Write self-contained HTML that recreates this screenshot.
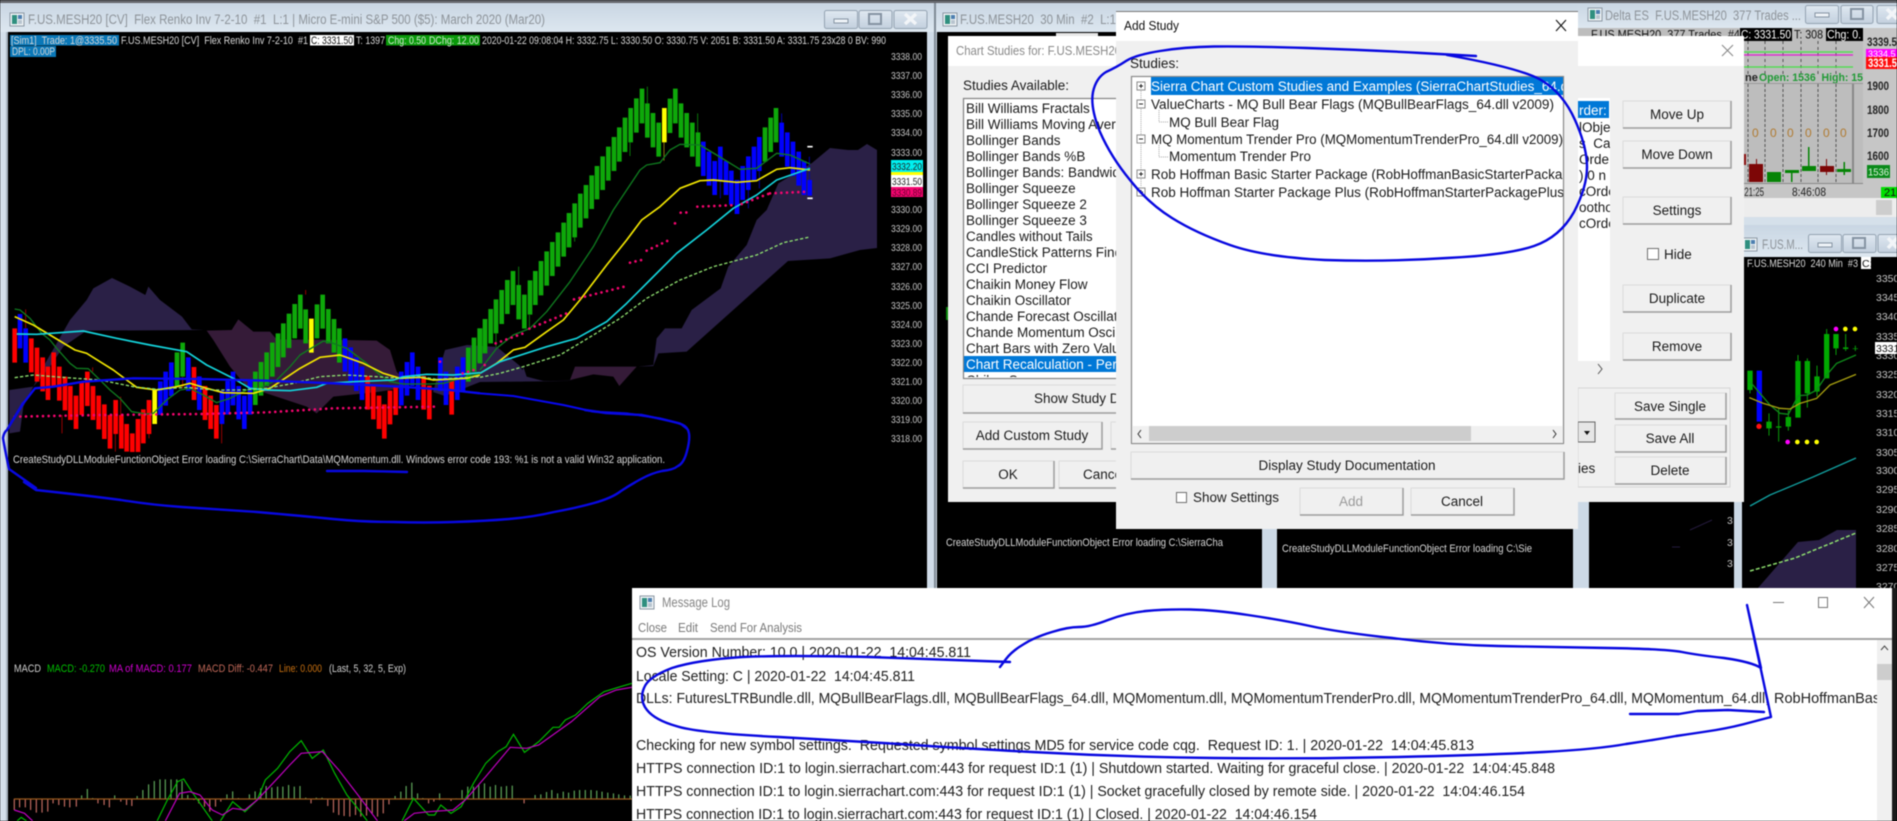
<!DOCTYPE html>
<html><head><meta charset="utf-8"><title>Sierra Chart</title>
<style>
html,body{margin:0;padding:0;background:#000;width:1897px;height:821px;overflow:hidden}
svg{display:block;position:absolute;left:0;top:0;filter:blur(.4px)}
text{font-family:"Liberation Sans",sans-serif;white-space:pre}
.ns{vector-effect:non-scaling-stroke}
.t{font-size:13.5px;fill:#1a1a1a}
.c{font-size:13.5px;fill:#1a1a1a;text-anchor:middle}
.p{font-size:10.5px;fill:#c4c4c4}
.s{font-size:11px;fill:#d8d8d8}
.l{font-size:14.5px;fill:#202020}
.w{font-size:13.5px;fill:#8d9399}
.btn{fill:#f0f0f0;stroke:#dcdcdc;stroke-width:1}
.bd{fill:none;stroke:#9c9c9c;stroke-width:1.5}
.hand{fill:none;stroke:#0808e0;stroke-width:2.4;stroke-linejoin:round;stroke-linecap:round}
.ln{fill:none;stroke-linejoin:round}
</style></head><body>
<svg width="1897" height="821" viewBox="0 0 1897 821" xmlns="http://www.w3.org/2000/svg">
<defs>
<linearGradient id="tb" x1="0" y1="0" x2="0" y2="1"><stop offset="0" stop-color="#c9d6e3"/><stop offset="1" stop-color="#dde7f0"/></linearGradient>
<linearGradient id="wb" x1="0" y1="0" x2="0" y2="1"><stop offset="0" stop-color="#dfe8f1"/><stop offset="1" stop-color="#c3d0de"/></linearGradient>
<clipPath id="tree"><rect x="1131" y="76" width="432" height="350"/></clipPath>
<clipPath id="log"><rect x="632" y="640" width="1245" height="181"/></clipPath>
<clipPath id="list"><rect x="963" y="98" width="153" height="279"/></clipPath>
<clipPath id="ch1"><rect x="8" y="32" width="919" height="789"/></clipPath>
<clipPath id="ch4"><rect x="1742" y="257" width="155" height="331"/></clipPath>
<clipPath id="ch3"><rect x="1578" y="28" width="319" height="170"/></clipPath>
<g id="ico"><rect x="0" y="0" width="14" height="13" fill="#eef2f5" stroke="#8a97a3"/><rect x="2" y="2" width="5" height="9" fill="#2f8f7f"/><rect x="8" y="2" width="4" height="4" fill="#4d7fb0"/><rect x="8" y="7" width="4" height="4" fill="#b8c4cf"/></g>
</defs>

<rect width="1897" height="821" fill="#000"/>
<rect width="1897" height="3" fill="#62646a"/>

<!-- window frames -->
<rect x="0" y="3" width="937" height="818" fill="#d4dfea"/>
<rect x="0" y="3" width="937" height="29" fill="url(#tb)"/>
<rect x="8" y="32" width="919" height="789" fill="#000"/>
<rect x="927" y="32" width="10" height="789" fill="#d0dce8"/>
<rect x="934" y="3" width="2" height="818" fill="#7f8a95"/>
<rect x="6" y="32" width="2" height="789" fill="#a8b4c0"/>
<use href="#ico" x="10" y="13"/>
<text class="w" x="28" y="24" textLength="517" lengthAdjust="spacingAndGlyphs">F.US.MESH20 [CV]  Flex Renko Inv 7-2-10  #1  L:1 | Micro E-mini S&amp;P 500 ($5): March 2020 (Mar20)</text>
<g fill="url(#wb)" stroke="#93a2b1"><rect x="824.500" y="10.500" width="33" height="18" rx="2"/><rect x="859" y="10.500" width="33" height="18" rx="2"/><rect x="894" y="10.500" width="33" height="18" rx="2"/></g>
<rect x="834" y="19" width="14" height="4" fill="#eef3f7" stroke="#8593a2"/>
<rect x="869" y="14" width="12" height="10" fill="none" stroke="#8593a2" stroke-width="2"/>
<path d="M905 14L916 24M916 14L905 24" stroke="#f2f5f8" stroke-width="3.500"/>

<!-- window 2 -->
<rect x="937" y="3" width="645" height="29" fill="url(#tb)"/>
<rect x="940" y="32" width="322" height="556" fill="#000"/>
<rect x="1262" y="32" width="15" height="556" fill="#ccd9e6"/>
<rect x="1277" y="32" width="296" height="556" fill="#000"/>
<rect x="1573" y="28" width="16" height="560" fill="#ccd9e6"/>
<rect x="1589" y="28" width="145" height="560" fill="#000"/>
<rect x="1734" y="190" width="8" height="398" fill="#ccd9e6"/>
<use href="#ico" x="943" y="13"/>
<text class="w" x="960" y="24" textLength="156" lengthAdjust="spacingAndGlyphs">F.US.MESH20  30 Min  #2  L:1</text>
<rect x="1056" y="33" width="42" height="3" fill="#e8e8e8"/>
<rect x="946" y="307" width="2" height="13" fill="#0a8a0a"/>
<text class="s" x="946" y="546" textLength="277" lengthAdjust="spacingAndGlyphs" fill="#cfcfcf">CreateStudyDLLModuleFunctionObject Error loading C:\SierraCha</text>
<text class="s" x="1282" y="552" textLength="250" lengthAdjust="spacingAndGlyphs" fill="#cfcfcf">CreateStudyDLLModuleFunctionObject Error loading C:\Sie</text>
<text class="p" x="1727" y="524">3</text><text class="p" x="1727" y="546">3</text><text class="p" x="1727" y="567">3</text>
<path d="M1690 530L1712 520M1672 547H1680" stroke="#241a3c" fill="none"/>

<!-- window 3 -->
<rect x="1578" y="3" width="319" height="25" fill="url(#tb)"/>
<use href="#ico" x="1588" y="8"/>
<text class="w" x="1605" y="20" textLength="196" lengthAdjust="spacingAndGlyphs">Delta ES  F.US.MESH20  377 Trades ...</text>
<g fill="url(#wb)" stroke="#93a2b1"><rect x="1805.500" y="5.500" width="33" height="18" rx="2"/><rect x="1841" y="5.500" width="32" height="18" rx="2"/><rect x="1877" y="5.500" width="30" height="18" rx="2"/></g>
<rect x="1815" y="13" width="14" height="4" fill="#eef3f7" stroke="#8593a2"/>
<rect x="1851" y="9" width="12" height="10" fill="none" stroke="#8593a2" stroke-width="2"/>
<path d="M1887 9L1897 19M1897 9L1887 19" stroke="#f2f5f8" stroke-width="3.500"/>
<g clip-path="url(#ch3)">
<rect x="1578" y="28" width="319" height="170" fill="#c6c6c6"/>
<rect x="1578" y="28" width="285" height="156" fill="#bdbdbd"/>
<text x="1591" y="38.500" font-size="11.500" fill="#111" textLength="149" lengthAdjust="spacingAndGlyphs">F.US.MESH20  377 Trades  #4</text>
<rect x="1740" y="28" width="52" height="13" fill="#000"/>
<text x="1741" y="38.500" font-size="11.500" fill="#fff" textLength="50" lengthAdjust="spacingAndGlyphs">C: 3331.50</text>
<text x="1794" y="38.500" font-size="11.500" fill="#111" textLength="29" lengthAdjust="spacingAndGlyphs">T: 308</text>
<rect x="1826" y="28" width="37" height="13" fill="#000"/>
<text x="1827" y="38.500" font-size="11.500" fill="#fff" textLength="34" lengthAdjust="spacingAndGlyphs">Chg: 0.</text>
<path d="M1748 41V74M1765 41V74M1783 41V74M1801 41V74M1818 41V74M1836 41V74" stroke="#555" stroke-dasharray="3 3" fill="none"/>
<path d="M1742 52H1853M1742 67H1853" stroke="#45e045" stroke-width="1.300"/>
<path d="M1742 55H1853" stroke="#e020d0" stroke-width="1.300"/>
<text x="1745" y="81" font-size="11" font-weight="bold" fill="#222">ne</text>
<text x="1759" y="81" font-size="11" font-weight="bold" fill="#209a35" textLength="104" lengthAdjust="spacingAndGlyphs">Open: 1536  High: 15</text>
<path d="M1742 83.500H1863" stroke="#999"/>
<path d="M1748 84V183M1765 84V183M1783 84V183M1801 84V183M1818 84V183M1836 84V183" stroke="#555" stroke-dasharray="3 2" fill="none"/>
<path d="M1853 84V183" stroke="#888" stroke-width="2"/>
<path d="M1742 183.500H1863" stroke="#888"/>
<g font-size="12" fill="#b07a30"><text x="1752" y="137">0</text><text x="1770" y="137">0</text><text x="1787" y="137">0</text><text x="1805" y="137">0</text><text x="1823" y="137">0</text><text x="1840" y="137">0</text></g>
<rect x="1742" y="154" width="4" height="11" fill="#8a0f0f"/>
<g fill="#7d0606"><rect x="1749" y="164" width="14" height="18"/><rect x="1820" y="166" width="14" height="6"/><rect x="1826" y="159" width="1" height="16"/><rect x="1756" y="159" width="1" height="6"/></g>
<g fill="#058405"><rect x="1767" y="172" width="14" height="10"/><rect x="1785" y="170" width="14" height="3"/><rect x="1791" y="172" width="1.500" height="10"/><rect x="1802" y="166" width="14" height="5"/><rect x="1808" y="147" width="1.500" height="20"/><rect x="1837" y="169" width="14" height="3"/><rect x="1843.500" y="162" width="1.500" height="13"/></g>
<g font-size="11.500" fill="#222" font-weight="bold"><text x="1867" y="46" textLength="30" lengthAdjust="spacingAndGlyphs">3339.5</text><text x="1867" y="90" textLength="22" lengthAdjust="spacingAndGlyphs">1900</text><text x="1867" y="114" textLength="22" lengthAdjust="spacingAndGlyphs">1800</text><text x="1867" y="137" textLength="22" lengthAdjust="spacingAndGlyphs">1700</text><text x="1867" y="160" textLength="22" lengthAdjust="spacingAndGlyphs">1600</text></g>
<rect x="1866" y="49" width="31" height="9" fill="#ff00ff"/>
<text x="1868" y="57" font-size="9" fill="#fff">3334.5</text>
<rect x="1866" y="57" width="31" height="12" fill="#ff0a0a"/>
<text x="1868" y="67" font-size="11.500" font-weight="bold" fill="#fff" textLength="29" lengthAdjust="spacingAndGlyphs">3331.5</text>
<rect x="1867" y="165" width="23" height="13" fill="#0a8a1a"/>
<text x="1868" y="175.500" font-size="10.500" fill="#dff5df" textLength="21" lengthAdjust="spacingAndGlyphs">1536</text>
<text x="1742" y="196" font-size="11.500" fill="#222" textLength="22" lengthAdjust="spacingAndGlyphs">:21:25</text>
<text x="1792" y="196" font-size="11.500" fill="#222" textLength="34" lengthAdjust="spacingAndGlyphs">8:46:08</text>
<rect x="1881" y="187" width="16" height="11" fill="#00e000"/>
<text x="1884" y="196" font-size="11" fill="#111">21</text>
</g>
<rect x="1744" y="198" width="153" height="19" fill="#ededed"/>
<rect x="1876" y="200" width="16" height="15" fill="#cdcdcd"/>
<rect x="1744" y="217" width="153" height="8" fill="#d5e0ea"/>

<!-- window 4 -->
<rect x="1742" y="225" width="155" height="32" fill="url(#tb)"/>
<use href="#ico" x="1743" y="238"/>
<text class="w" x="1762" y="249" textLength="41" lengthAdjust="spacingAndGlyphs">F.US.M...</text>
<g fill="url(#wb)" stroke="#93a2b1"><rect x="1808.500" y="234.500" width="33" height="18" rx="2"/><rect x="1843" y="234.500" width="33" height="18" rx="2"/><rect x="1878" y="234.500" width="30" height="18" rx="2"/></g>
<rect x="1818" y="243" width="14" height="4" fill="#eef3f7" stroke="#8593a2"/>
<rect x="1853" y="238" width="12" height="10" fill="none" stroke="#8593a2" stroke-width="2"/>
<path d="M1888 238L1897 248M1897 238L1888 248" stroke="#f2f5f8" stroke-width="3.500"/>
<g clip-path="url(#ch4)">
<rect x="1742" y="257" width="155" height="331" fill="#000"/>
<path d="M1758 588L1798 542L1819 540L1837 530L1856 530V588Z" fill="#2a2046"/>
<text class="s" x="1747" y="267" textLength="111" lengthAdjust="spacingAndGlyphs">F.US.MESH20  240 Min  #3</text>
<rect x="1861" y="257" width="10" height="12" fill="#fff"/><text x="1862" y="267" font-size="10.500" fill="#111">C:</text>
<g class="p">
<text x="1876" y="282">3350.</text><text x="1876" y="301">3345.</text><text x="1876" y="320">3340.</text><text x="1876" y="340">3335.</text><text x="1876" y="359">3330.</text><text x="1876" y="378">3325.</text><text x="1876" y="398">3320.</text><text x="1876" y="417">3315.</text><text x="1876" y="436">3310.</text><text x="1876" y="456">3305.</text><text x="1876" y="474">3300.</text><text x="1876" y="493">3295.</text><text x="1876" y="513">3290.</text><text x="1876" y="532">3285.</text><text x="1876" y="552">3280.</text><text x="1876" y="571">3275.</text><text x="1876" y="590">3270.</text></g>
<rect x="1875" y="342" width="22" height="12" fill="#fff"/><text x="1876" y="352" font-size="10.500" fill="#111">3331.</text>
<g transform="translate(1730 225) scale(.33333)">
<path d="M60 437V495M117 590V610M146 604V608M175 576V605M204 408V578M232 408V505M261 454V500M290 327V460M318 327V370M347 367V372M376 370V372" stroke="#00aa00" stroke-width="16" fill="none"/>
<path d="M60 495V505M117 565V632M146 550V650M175 555V617M204 390V408M232 400V548M261 422V514M290 312V327M318 370V390M347 327V378M376 362V378" stroke="#0a9a0a" stroke-width="3" fill="none"/>
<path d="M88 437V590" stroke="#0000ff" stroke-width="16"/>
<circle cx="87" cy="604" r="8" fill="#ff1010"/>
<g fill="#ff00ff"><circle cx="318" cy="312" r="7"/><circle cx="173" cy="651" r="7"/></g>
<g fill="#ffff00"><circle cx="346" cy="312" r="7"/><circle cx="375" cy="312" r="7"/><circle cx="202" cy="651" r="7"/><circle cx="231" cy="651" r="7"/><circle cx="260" cy="651" r="7"/></g>
<polyline class="ln" points="60,470 90,505 120,540 150,565 175,568 205,512 232,510 260,495 290,450 320,415 378,390" stroke="#0f8a1a" stroke-width="4"/>
<polyline class="ln" points="58,518 100,535 150,550 180,552 210,535 260,520 300,480 378,448" stroke="#a8a010" stroke-width="4"/>
</g>
<polyline class="ln" points="1750,506 1770,495 1813,477 1856,458" stroke="#12a0a0" stroke-width="1.300"/>
<polyline class="ln" points="1750,571 1795,558 1856,533" stroke="#8fe070" stroke-width="1.500" stroke-dasharray="4 2"/>
</g>
<rect x="1892" y="588" width="5" height="233" fill="#1a1a1a"/>

<!-- main chart -->
<g clip-path="url(#ch1)">
<g transform="translate(0 280) scale(.33333)">
<path d="M28 330L100 320L130 260L210 120L260 60L280 25L336 -6L390 20L436 45L445 20L480 60L546 110L575 148L612 150L260 152L190 200L150 260L100 320L70 380L60 455L28 460Z" fill="#2a2046"/>
<path d="M620 152L695 150L715 118L760 155L810 155L830 178L1030 180L1130 182L1170 210L1190 275L1230 320L1140 335L1000 350L950 400L920 380L800 340L740 320L690 260L640 180Z" fill="#351b38"/>
</g>
<path d="M433 392L445 350L467 345L497 347L520 366L527 378L543 381L572 381L480 382L445 396Z" fill="#2a2046"/>
<g transform="translate(480 90) scale(.33333)">
<path d="M130 830L140 860L190 873L270 870L285 870L120 875Z" fill="#2a2046"/>
<path d="M475 830L520 825L530 745L555 715L605 715L635 660L722 595L745 530L800 465L830 390L860 360L895 280L996 219L1050 174L1104 180L1134 180L1161 162L1191 180V474L1140 480L1050 505L924 513L620 785L535 790L520 828Z" fill="#2a2046"/>
<path d="M270 870L285 830L470 830L418 888L400 860L340 853Z" fill="#351b38"/>
</g>

<g transform="translate(0 280) scale(.33333)" fill="none">
<path d="M77 88V145M346 462V515M362 350V405M447 462V475M665 432V490M917 30V44M548 290V325M186 405V460M278 262V275" stroke="#b00000" stroke-width="2.500"/>
<path stroke="#ff0000" stroke-width="14" d="M44 145V248M94 175V277M111 203V305M128 232V334M144 260V360M161 217V320M178 260V362M195 290V391M211 318V420M228 347V447M245 304V405M262 275V378M279 318V420M296 347V448M313 373V477M330 405V506M347 360V462M364 405V506M380 432V515M397 460V516M414 417V516M430 388V490M447 360V462M582 261V360M615 318V420M632 347V447M649 375V476M1103 288V389M1120 317V418M1137 347V447M1153 373V476M1170 332V433M1187 320V405M1271 288V389M1288 317V418M1355 303V404"/>
<path stroke="#0000ff" stroke-width="14" d="M60 102V205M77 145V248M481 304V405M497 275V377M514 247V348M565 232V333M598 289V390M666 332V432M683 303V404M699 275V376M716 318V418M733 347V447M750 303V404M1035 175V275M1052 202V305M1069 232V333M1086 260V360M1204 275V376M1221 246V347M1237 217V318M1254 260V360M1321 232V333M1338 275V375M1372 260V360M1389 232V333"/>
<path stroke="#0ea80a" stroke-width="14" d="M531 217V320M548 188V290M766 275V375M783 246V347M800 217V318M817 188V290M834 160V261M850 130V232M867 101V204M884 72V175M901 44V146M917 88V190M951 73V175M968 44V146M985 87V190M1002 117V218M1018 145V248M1405 203V305M1422 173V275M1439 145V247"/>
<path stroke="#ffff00" stroke-width="14" d="M464 330V432M934 116V218"/>
<polyline class="ln" points="44,87 60,90 90,115 125,160 150,180 170,205 210,250 230,265 265,266 300,300 330,330 360,355 395,395 440,402 460,400 500,360 540,330 570,325 610,345 650,368 690,355 740,330 780,325 830,300 870,260 900,225 970,183 1000,190 1040,205 1100,250 1140,285 1170,305 1210,312 1290,312 1330,310 1400,290 1440,280" stroke="#0f7a1f" stroke-width="4"/>
<polyline class="ln" points="44,110 100,135 150,165 225,210 260,220 300,245 340,270 380,300 410,322 470,330 530,320 570,310 620,325 670,338 760,340 810,325 900,265 960,232 1020,225 1090,250 1150,280 1200,295 1260,292 1300,300 1400,295 1440,285" stroke="#f2e600" stroke-width="5"/>
<polyline class="ln" points="50,162 110,163 250,153 350,175 450,195 560,215 620,255 700,295 750,325 800,330 870,332 950,322 980,310 1060,305 1180,300 1210,290 1280,283 1360,285 1440,278" stroke="#14d4dc" stroke-width="5"/>
<polyline class="ln" points="44,293 100,285 200,293 300,300 400,320 470,328 560,322 640,330 720,330 800,325 880,310 960,290 1040,285 1130,290 1200,295 1260,290 1310,298 1440,290" stroke="#8fe070" stroke-width="4" stroke-dasharray="10 6"/>
<polyline class="ln" points="44,410 300,405 600,402 800,397 1000,385 1305,380" stroke="#f5056f" stroke-width="8" stroke-linecap="round" stroke-dasharray="0 17"/>
<polyline class="ln" points="1388,280 1422,270" stroke="#f5056f" stroke-width="8" stroke-linecap="round" stroke-dasharray="0 17"/>
<circle cx="1320" cy="245" r="4" fill="#f5056f"/>
<polyline class="ln" points="5,500 20,450 70,370 105,325 160,320 250,305 400,295 600,297 800,302 1000,310 1200,320 1350,330 1440,340" stroke="#0808f0" stroke-width="7"/>
</g>

<g transform="translate(480 90) scale(.33333)" fill="none">
<path stroke="#0d8a0d" stroke-width="2.500" d="M502 -10V40M450 157V198M653 70V127M116 530V585M148 675V715M48 730V770M284 442V455"/>
<path stroke="#a08a10" stroke-width="2.500" d="M552 157V212"/>
<path stroke="#0000c0" stroke-width="2.500" d="M905 70V98M838 243V295M805 300V355M721 272V325M988 200V270"/>
<path stroke="#0ea80a" stroke-width="14" d="M0 715V820M15 687V790M32 657V760M48 628V730M65 600V702M82 570V672M99 543V645M116 585V688M133 614V716M150 571V674M166 543V645M183 513V616M200 484V587M217 456V558M234 427V530M251 398V500M267 369V472M284 340V442M301 311V413M318 285V385M335 256V357M351 228V328M368 199V300M385 170V272M402 141V243M418 112V215M435 83V186M452 54V157M469 25V128M486 -4V100M502 40V143M519 69V172M536 98V200M570 26V129M586 -4V100M603 40V143M620 69V172M637 98V200M654 127V230M855 112V215M872 83V186M888 54V157"/>
<path stroke="#ffff00" stroke-width="14" d="M553 54V157"/>
<path stroke="#0000ff" stroke-width="14" d="M670 155V258M687 185V287M704 213V315M721 170V272M738 213V315M754 242V344M771 270V372M788 228V330M805 199V300M822 170V272M838 141V243M905 98V200M922 127V230M939 155V258M956 185V287M972 213V315M989 270V317"/>
<polyline class="ln" points="0,840 50,775 100,735 150,715 200,665 270,575 340,470 400,360 480,240 500,225 540,218 570,180 600,163 660,165 710,195 780,238 830,235 890,190 930,195 990,222" stroke="#0f7a1f" stroke-width="4"/>
<polyline class="ln" points="0,850 50,820 100,780 135,772 200,725 250,690 300,630 380,525 440,450 485,390 540,350 600,295 660,272 700,270 770,277 830,272 890,238 930,233 990,240" stroke="#f2e600" stroke-width="5"/>
<polyline class="ln" points="0,850 60,815 200,770 290,745 380,695 440,640 510,570 590,490 680,420 760,355 830,315 890,270 990,235" stroke="#14d4dc" stroke-width="5"/>
<polyline class="ln" points="0,862 60,850 130,830 240,795 340,735 420,685 500,625 600,570 700,530 830,495 910,458 985,442" stroke="#8fe070" stroke-width="4" stroke-dasharray="10 6"/>
<g stroke="#f5056f" stroke-width="8" stroke-linecap="round" stroke-dasharray="0 17">
<polyline points="14,825 30,820"/><polyline points="47,760 130,730"/><polyline points="148,716 265,668"/><polyline points="282,628 433,590"/><polyline points="450,518 484,510"/><polyline points="500,482 568,450"/><polyline points="585,400 585,401"/><polyline points="602,368 635,367"/><polyline points="652,350 770,345"/><polyline points="785,342 870,310"/><polyline points="870,310 988,305"/>
</g>
<path d="M982 170H998M982 325H998" stroke="#fff" stroke-width="5"/>
<polyline class="ln" points="0,910 100,918 250,945 340,965 440,970 540,985 600,1000 625,1020" stroke="#0808f0" stroke-width="6"/>
</g>

<!-- header text -->
<rect x="10" y="35" width="109" height="10.500" fill="#0a78b8"/>
<text class="s" x="11" y="44" fill="#eef" textLength="106" lengthAdjust="spacingAndGlyphs">[Sim1]  Trade: 1@3335.50</text>
<text class="s" x="121" y="44" textLength="187" lengthAdjust="spacingAndGlyphs">F.US.MESH20 [CV]  Flex Renko Inv 7-2-10  #1</text>
<rect x="310" y="35" width="44" height="10.500" fill="#fff"/>
<text x="311" y="44" font-size="11" fill="#111" textLength="42" lengthAdjust="spacingAndGlyphs">C: 3331.50</text>
<text class="s" x="356" y="44" textLength="29" lengthAdjust="spacingAndGlyphs">T: 1397</text>
<rect x="386" y="35" width="94" height="10.500" fill="#0a9a0a"/>
<text x="388" y="44" font-size="11" fill="#d5ead5" textLength="38" lengthAdjust="spacingAndGlyphs">Chg: 0.50</text>
<text x="429" y="44" font-size="11" fill="#d5ead5" textLength="50" lengthAdjust="spacingAndGlyphs">DChg: 12.00</text>
<text class="s" x="482" y="44" textLength="404" lengthAdjust="spacingAndGlyphs">2020-01-22 09:08:04 H: 3332.75 L: 3330.50 O: 3330.75 V: 2051 B: 3331.50 A: 3331.75 23x28 0 BV: 990</text>
<rect x="10" y="46" width="46" height="11" fill="#0a78b8"/>
<text class="s" x="12" y="55" fill="#eef" textLength="43" lengthAdjust="spacingAndGlyphs">DPL: 0.00P</text>

<!-- price axis -->
<g class="p">
<text x="891" y="60" textLength="31" lengthAdjust="spacingAndGlyphs">3338.00</text>
<text x="891" y="79" textLength="31" lengthAdjust="spacingAndGlyphs">3337.00</text>
<text x="891" y="98" textLength="31" lengthAdjust="spacingAndGlyphs">3336.00</text>
<text x="891" y="117" textLength="31" lengthAdjust="spacingAndGlyphs">3335.00</text>
<text x="891" y="136" textLength="31" lengthAdjust="spacingAndGlyphs">3334.00</text>
<text x="891" y="156" textLength="31" lengthAdjust="spacingAndGlyphs">3333.00</text>
<text x="891" y="213" textLength="31" lengthAdjust="spacingAndGlyphs">3330.00</text>
<text x="891" y="232" textLength="31" lengthAdjust="spacingAndGlyphs">3329.00</text>
<text x="891" y="251" textLength="31" lengthAdjust="spacingAndGlyphs">3328.00</text>
<text x="891" y="270" textLength="31" lengthAdjust="spacingAndGlyphs">3327.00</text>
<text x="891" y="290" textLength="31" lengthAdjust="spacingAndGlyphs">3326.00</text>
<text x="891" y="309" textLength="31" lengthAdjust="spacingAndGlyphs">3325.00</text>
<text x="891" y="328" textLength="31" lengthAdjust="spacingAndGlyphs">3324.00</text>
<text x="891" y="347" textLength="31" lengthAdjust="spacingAndGlyphs">3323.00</text>
<text x="891" y="366" textLength="31" lengthAdjust="spacingAndGlyphs">3322.00</text>
<text x="891" y="385" textLength="31" lengthAdjust="spacingAndGlyphs">3321.00</text>
<text x="891" y="404" textLength="31" lengthAdjust="spacingAndGlyphs">3320.00</text>
<text x="891" y="423" textLength="31" lengthAdjust="spacingAndGlyphs">3319.00</text>
<text x="891" y="442" textLength="31" lengthAdjust="spacingAndGlyphs">3318.00</text>
</g>
<rect x="891" y="172" width="32" height="3" fill="#ffff00"/>
<rect x="891" y="160" width="32" height="12" fill="#00f0f0"/>
<text x="892" y="170" font-size="10.500" fill="#222" textLength="30" lengthAdjust="spacingAndGlyphs">3332.20</text>
<rect x="891" y="175" width="32" height="12" fill="#fff"/>
<text x="892" y="185" font-size="10.500" fill="#222" textLength="30" lengthAdjust="spacingAndGlyphs">3331.50</text>
<rect x="891" y="187" width="32" height="10" fill="#f5056f"/>
<text x="892" y="196" font-size="10.500" fill="#6a0030" textLength="30" lengthAdjust="spacingAndGlyphs">3330.89</text>

<text class="s" x="13" y="463" fill="#cfcfcf" textLength="652" lengthAdjust="spacingAndGlyphs">CreateStudyDLLModuleFunctionObject Error loading C:\SierraChart\Data\MQMomentum.dll. Windows error code 193: %1 is not a valid Win32 application.</text>

<!-- MACD -->
<text font-size="11" x="14" y="672" fill="#d0d0d0" textLength="27" lengthAdjust="spacingAndGlyphs">MACD</text>
<text font-size="11" x="47" y="672" fill="#00c000" textLength="58" lengthAdjust="spacingAndGlyphs">MACD: -0.270</text>
<text font-size="11" x="109" y="672" fill="#d000d0" textLength="83" lengthAdjust="spacingAndGlyphs">MA of MACD: 0.177</text>
<text font-size="11" x="198" y="672" fill="#c06858" textLength="75" lengthAdjust="spacingAndGlyphs">MACD Diff: -0.447</text>
<text font-size="11" x="279" y="672" fill="#c87010" textLength="43" lengthAdjust="spacingAndGlyphs">Line: 0.000</text>
<text font-size="11" x="329" y="672" fill="#d0d0d0" textLength="77" lengthAdjust="spacingAndGlyphs">(Last, 5, 32, 5, Exp)</text>
<g transform="translate(0 650) scale(.40816 .33333)" fill="none">
<path class="ns" stroke="#c06a60" stroke-width="1.200" d="M35 447V480M48 447V472M62 447V472M75 447V480M89 447V488M103 447V488M117 447V485M130 447V460M144 447V465M158 447V470M171 447V472M187 447V470M240 447V460M255 447V465M268 447V472M296 447V455M310 447V465M323 447V468M475 447V450M487 447V460M501 447V470M514 447V485M528 447V470M541 447V455M762 447V460M803 447V468M817 447V488M830 447V495M843 447V498M857 447V500M871 447V495M884 447V500M898 447V497M912 447V490M925 447V500M939 447V490M953 447V463M1050 447V460M1063 447V455M1077 447V450M1105 447V453M1284 447V460"/>
<path class="ns" stroke="#5ea55a" stroke-width="1.200" d="M200 447V436M214 447V417M227 447V444M281 447V436M336 447V438M350 447V420M364 447V403M378 447V393M392 447V388M405 447V388M419 447V388M433 447V388M446 447V393M460 447V435M556 447V433M570 447V424M584 447V444M611 447V433M625 447V424M639 447V415M652 447V408M666 447V412M680 447V410M693 447V410M707 447V405M721 447V410M735 447V408M749 447V443M775 447V443M789 447V443M968 447V438M982 447V425M995 447V408M1009 447V398M1023 447V430M1036 447V444M1077 447V430M1118 447V445M1132 447V420M1146 447V410M1160 447V410M1173 447V405M1187 447V400M1201 447V410M1214 447V405M1228 447V410M1241 447V408M1255 447V407M1269 447V445M1311 447V435M1325 447V433M1339 447V426M1352 447V420M1366 447V430M1380 447V425M1393 447V428M1407 447V422M1420 447V420M1434 447V420M1448 447V420M1462 447V422M1475 447V425M1489 447V428M1503 447V430M1516 447V433M1530 447V436M1544 447V437"/>
<path class="ns" stroke="#9b5a1e" stroke-width="1.300" d="M34 447H1548"/>
<g class="ns" stroke="#00b800" stroke-width="1.200">
<polyline class="ns" points="42,513 52,502 65,513"/>
<polyline class="ns" points="385,513 410,450 435,395 450,387 470,425 490,460 520,513"/>
<polyline class="ns" points="540,513 570,455 600,485 630,450 650,390 680,355 710,305 738,272 765,325 792,300 820,370 850,435 870,465 900,513"/>
<polyline class="ns" points="985,513 1013,445 1050,495 1065,495 1080,465 1105,490 1130,470 1160,400 1190,340 1220,305 1240,290 1258,253 1285,307 1320,275 1355,232 1370,232 1385,210 1410,195 1440,160 1480,125 1520,110 1548,100"/>
</g>
<g stroke="#c000c0" stroke-width="1.200">
<polyline class="ns" points="35,480 60,490 80,513"/>
<polyline class="ns" points="405,513 440,430 465,425 490,435 520,480 545,495 570,475 600,480 630,450 680,385 710,345 738,310 790,305 830,360 880,440 925,513"/>
<polyline class="ns" points="990,513 1015,490 1050,485 1110,480 1140,450 1190,380 1250,292 1290,295 1320,285 1400,215 1470,140 1510,120 1548,112"/>
</g>
</g>
</g>

<!-- hand drawn circle 1 -->
<path class="hand" d="M585 410L606 413L642 415Q676 422 682 424.500Q688 427 689 433.500Q690 440 687 451Q684 463 678 466Q673 470 662 471Q652 473 641 479Q630 485 621 491Q612 498 594 503Q576 508 554 512Q533 517 509 519Q485 521 454 522Q424 523 394 522Q364 522 333 519Q303 516 257 512Q212 509 182 507Q152 505 121 500Q91 496 36 490L24 482L36 488L9 469Q5 450 3 438Q4 432 7 430L23 403"/>
<polyline class="hand" points="327,471 364,471 407,472"/>

<!-- Chart Studies dialog -->
<rect x="948" y="36" width="796" height="466" fill="#f0f0f0"/>
<rect x="948" y="36" width="796" height="30" fill="#fff"/>
<text x="956" y="55" font-size="13" fill="#8a8a8a" textLength="165" lengthAdjust="spacingAndGlyphs">Chart Studies for: F.US.MESH20</text>
<path d="M1722 45L1733 56M1733 45L1722 56" stroke="#8a8a8a" stroke-width="1.100"/>
<text class="t" x="963" y="90" textLength="106" lengthAdjust="spacingAndGlyphs">Studies Available:</text>
<rect x="963.500" y="98.500" width="155" height="280" fill="#fff" stroke="#828282" stroke-width="1.200"/>
<rect x="964" y="356" width="154" height="16" fill="#0078d7"/>
<g clip-path="url(#list)">
<g class="t">
<text x="966" y="113">Bill Williams Fractals</text>
<text x="966" y="129">Bill Williams Moving Average</text>
<text x="966" y="145">Bollinger Bands</text>
<text x="966" y="161">Bollinger Bands %B</text>
<text x="966" y="177">Bollinger Bands: Bandwidth</text>
<text x="966" y="193">Bollinger Squeeze</text>
<text x="966" y="209">Bollinger Squeeze 2</text>
<text x="966" y="225">Bollinger Squeeze 3</text>
<text x="966" y="241">Candles without Tails</text>
<text x="966" y="257">CandleStick Patterns Finder</text>
<text x="966" y="273">CCI Predictor</text>
<text x="966" y="289">Chaikin Money Flow</text>
<text x="966" y="305">Chaikin Oscillator</text>
<text x="966" y="321">Chande Forecast Oscillator</text>
<text x="966" y="337">Chande Momentum Oscillator</text>
<text x="966" y="353">Chart Bars with Zero Values</text>
<text x="966" y="369" fill="#fff" style="fill:#fff">Chart Recalculation - Per</text>
<text x="966" y="385">Chiker Squeeze</text>
</g></g>
<rect class="btn" x="963" y="385" width="155" height="28"/><path class="bd" d="M963 413H1118"/>
<text class="t" x="1034" y="403">Show Study D</text>
<rect class="btn" x="963" y="422" width="139" height="27"/><path class="bd" d="M963 449H1102V422"/>
<text class="c" x="1032" y="440">Add Custom Study</text>
<rect class="btn" x="1111" y="422" width="10" height="27"/><path class="bd" d="M1111 449H1121"/>
<rect class="btn" x="963" y="461" width="91" height="27"/><path class="bd" d="M963 488H1054V461"/>
<text class="c" x="1008" y="479">OK</text>
<rect class="btn" x="1059" y="461" width="60" height="27"/><path class="bd" d="M1059 488H1119"/>
<text class="t" x="1083" y="479">Cancel</text>

<rect x="1570" y="98" width="40" height="280" fill="#fff"/>
<rect x="1570" y="101" width="39" height="17" fill="#0078d7"/>
<rect x="1570" y="361" width="40" height="17" fill="#f0f0f0"/>
<path d="M1598 364L1602 369L1598 374" fill="none" stroke="#555"/>
<g class="t"><text x="1579" y="115" style="fill:#fff">rder:</text><text x="1579" y="132">lObje</text><text x="1579" y="148">s  Ca</text><text x="1579" y="164">Orde</text><text x="1579" y="180">) 0 n</text><text x="1579" y="196">cOrde</text><text x="1579" y="212">ootho</text><text x="1579" y="228">cOrde</text></g>
<rect x="1610" y="96" width="8" height="284" fill="#f0f0f0"/>

<g>
<rect class="btn" x="1623" y="101" width="108" height="27"/><path class="bd" d="M1623 128H1731V101"/><text class="c" x="1677" y="119">Move Up</text>
<rect class="btn" x="1623" y="141" width="108" height="27"/><path class="bd" d="M1623 168H1731V141"/><text class="c" x="1677" y="159">Move Down</text>
<rect class="btn" x="1623" y="197" width="108" height="27"/><path class="bd" d="M1623 224H1731V197"/><text class="c" x="1677" y="215">Settings</text>
<rect x="1647.500" y="248.500" width="11" height="11" fill="#fff" stroke="#707070"/>
<text class="t" x="1664" y="259">Hide</text>
<rect class="btn" x="1623" y="285" width="108" height="27"/><path class="bd" d="M1623 312H1731V285"/><text class="c" x="1677" y="303">Duplicate</text>
<rect class="btn" x="1623" y="333" width="108" height="27"/><path class="bd" d="M1623 360H1731V333"/><text class="c" x="1677" y="351">Remove</text>
<rect x="1578" y="388" width="152" height="99" fill="none" stroke="#d4d4d4"/>
<rect class="btn" x="1615" y="393" width="111" height="26"/><path class="bd" d="M1615 419H1726V393"/><text class="c" x="1670" y="411">Save Single</text>
<rect class="btn" x="1615" y="425" width="111" height="27"/><path class="bd" d="M1615 452H1726V425"/><text class="c" x="1670" y="443">Save All</text>
<rect class="btn" x="1615" y="457" width="111" height="27"/><path class="bd" d="M1615 484H1726V457"/><text class="c" x="1670" y="475">Delete</text>
<rect x="1578" y="422" width="17" height="20" fill="#e6e6e6" stroke="#666"/>
<path d="M1584 431H1590L1587 435Z" fill="#111"/>
<text class="t" x="1578" y="473">ies</text>
</g>

<!-- Add Study dialog -->
<rect x="1116" y="11" width="462" height="518" fill="#f0f0f0"/>
<rect x="1116" y="11" width="462" height="30" fill="#fff"/>
<rect x="1116" y="11" width="462" height="1" fill="#777"/>
<text x="1124" y="30" font-size="13" fill="#111" textLength="55" lengthAdjust="spacingAndGlyphs">Add Study</text>
<path d="M1556 20L1566 31M1566 20L1556 31" stroke="#111" stroke-width="1.100"/>
<text class="t" x="1130" y="68" textLength="49" lengthAdjust="spacingAndGlyphs">Studies:</text>
<rect x="1131.500" y="76.500" width="432" height="367" fill="#fff" stroke="#8a8a8a" stroke-width="1.200"/>
<rect x="1151" y="77" width="412" height="18" fill="#0078d7"/>
<g clip-path="url(#tree)">
<text x="1151" y="91" font-size="13.500" fill="#fff">Sierra Chart Custom Studies and Examples (SierraChartStudies_64.dll v2009)</text>
<text class="t" x="1151" y="109" textLength="403" lengthAdjust="spacingAndGlyphs">ValueCharts - MQ Bull Bear Flags (MQBullBearFlags_64.dll v2009)</text>
<text class="t" x="1169" y="127" textLength="110" lengthAdjust="spacingAndGlyphs">MQ Bull Bear Flag</text>
<text class="t" x="1151" y="144" textLength="412" lengthAdjust="spacingAndGlyphs">MQ Momentum Trender Pro (MQMomentumTrenderPro_64.dll v2009)</text>
<text class="t" x="1169" y="161" textLength="142" lengthAdjust="spacingAndGlyphs">Momentum Trender Pro</text>
<text class="t" x="1151" y="179">Rob Hoffman Basic Starter Package (RobHoffmanBasicStarterPackage_64.dll)</text>
<text class="t" x="1151" y="197">Rob Hoffman Starter Package Plus (RobHoffmanStarterPackagePlus_64.dll)</text>
</g>
<path d="M1141 91V187M1159 110V122H1168M1159 145V157H1168" stroke="#a8a8a8" stroke-dasharray="1 1" fill="none"/>
<g fill="#fff" stroke="#8a8a8a"><rect x="1137" y="82" width="8" height="8"/><rect x="1137" y="100" width="8" height="8"/><rect x="1137" y="135" width="8" height="8"/><rect x="1137" y="170" width="8" height="8"/><rect x="1137" y="188" width="8" height="8"/></g>
<path d="M1139 86H1143M1141 84V88M1139 104H1143M1139 139H1143M1139 174H1143M1141 172V176M1139 192H1143M1141 190V194" stroke="#222" fill="none"/>
<rect x="1132" y="426" width="431" height="17" fill="#f0f0f0"/>
<rect x="1149" y="426" width="322" height="15" fill="#cdcdcd"/>
<path d="M1141 430L1138 434L1141 438M1553 430L1556 434L1553 438" fill="none" stroke="#333"/>
<rect class="btn" x="1131" y="452" width="433" height="27"/><path class="bd" d="M1131 479H1564V452"/>
<text class="c" x="1347" y="470" textLength="177" lengthAdjust="spacingAndGlyphs">Display Study Documentation</text>
<rect x="1176.500" y="492.500" width="10" height="10" fill="#fff" stroke="#707070"/>
<text class="t" x="1193" y="502" textLength="86" lengthAdjust="spacingAndGlyphs">Show Settings</text>
<rect class="btn" x="1300" y="488" width="103" height="27"/><path class="bd" d="M1300 515H1403V488"/>
<text class="c" x="1351" y="506" style="fill:#9a9a9a">Add</text>
<rect class="btn" x="1411" y="488" width="103" height="27"/><path class="bd" d="M1411 515H1514V488"/>
<text class="c" x="1462" y="506">Cancel</text>

<path class="hand" d="M1476 56L1421 53Q1367 50 1306 48Q1245 46 1214 46.500Q1184 47 1160 51Q1135 55 1126 61Q1117 67 1106 72Q1096 78 1093 92Q1090 107 1100 132Q1111 157 1130 180Q1148 203 1172 218Q1196 233 1230 245Q1264 257 1325 260Q1386 262 1447 258Q1508 255 1534 246Q1560 237 1574 212Q1587 187 1587 167Q1587 147 1575 120Q1563 93 1541 80Q1520 68 1447 55"/>

<!-- Message Log -->
<rect x="632" y="588" width="1260" height="233" fill="#fff"/>
<use href="#ico" x="640" y="596"/>
<text x="662" y="607" font-size="13.500" fill="#858585" textLength="68" lengthAdjust="spacingAndGlyphs">Message Log</text>
<text x="638" y="632" font-size="13" fill="#7a7a7a" textLength="29" lengthAdjust="spacingAndGlyphs">Close</text>
<text x="678" y="632" font-size="13" fill="#7a7a7a" textLength="20" lengthAdjust="spacingAndGlyphs">Edit</text>
<text x="710" y="632" font-size="13" fill="#7a7a7a" textLength="92" lengthAdjust="spacingAndGlyphs">Send For Analysis</text>
<path d="M1773 602.500H1784" stroke="#777"/>
<rect x="1818.500" y="597.500" width="9" height="10" fill="none" stroke="#777"/>
<path d="M1864 597L1874 608M1874 597L1864 608" stroke="#777"/>
<rect x="632" y="638" width="1260" height="2" fill="#a3a3a3"/>
<g clip-path="url(#log)">
<text class="l" x="636" y="657" textLength="335" lengthAdjust="spacingAndGlyphs">OS Version Number: 10.0 | 2020-01-22  14:04:45.811</text>
<text class="l" x="636" y="681" textLength="279" lengthAdjust="spacingAndGlyphs">Locale Setting: C | 2020-01-22  14:04:45.811</text>
<text class="l" x="636" y="703" textLength="1133" lengthAdjust="spacingAndGlyphs">DLLs: FuturesLTRBundle.dll, MQBullBearFlags.dll, MQBullBearFlags_64.dll, MQMomentum.dll, MQMomentumTrenderPro.dll, MQMomentumTrenderPro_64.dll, MQMomentum_64.dll,</text>
<text class="l" x="1774" y="703">RobHoffmanBasicStarter</text>
<text class="l" x="636" y="750" textLength="838" lengthAdjust="spacingAndGlyphs">Checking for new symbol settings.  Requested symbol settings MD5 for service code cqg.  Request ID: 1. | 2020-01-22  14:04:45.813</text>
<text class="l" x="636" y="773" textLength="919" lengthAdjust="spacingAndGlyphs">HTTPS connection ID:1 to login.sierrachart.com:443 for request ID:1 (1) | Shutdown started. Waiting for graceful close. | 2020-01-22  14:04:45.848</text>
<text class="l" x="636" y="796" textLength="889" lengthAdjust="spacingAndGlyphs">HTTPS connection ID:1 to login.sierrachart.com:443 for request ID:1 (1) | Socket gracefully closed by remote side. | 2020-01-22  14:04:46.154</text>
<text class="l" x="636" y="819" textLength="681" lengthAdjust="spacingAndGlyphs">HTTPS connection ID:1 to login.sierrachart.com:443 for request ID:1 (1) | Closed. | 2020-01-22  14:04:46.154</text>
</g>
<rect x="1877" y="640" width="15" height="181" fill="#f0f0f0"/>
<path d="M1881 650L1884.500 646L1888 650" fill="none" stroke="#444"/>
<rect x="1877" y="664" width="15" height="16" fill="#cdcdcd"/>

<path class="hand" d="M1000 667L1006 659Q1012 651 1024 644Q1035 637 1052 632Q1068 627 1079 627Q1090 627 1108 620Q1126 613 1146 611Q1166 609 1190 609.500Q1215 610 1248 615Q1282 620 1310 626Q1337 632 1392 638Q1447 645 1498 646Q1550 647 1608 648Q1666 649 1682 652Q1697 655 1724 658Q1752 662 1761 668L1747 605L1761 670L1771 717L1752 722Q1734 727 1716 730Q1697 733 1676 736Q1654 740 1626 744Q1599 749 1544 752Q1489 755 1398 757Q1306 759 1214 758Q1123 757 1032 752Q940 747 900 744Q861 742 779 737Q697 733 676 726Q655 720 647 710Q639 700 644 688Q648 677 672 668Q697 660 742 657Q788 655 869 657Q950 660 1010 662"/>
<polyline class="hand" points="1630,714 1679,714 1697,711 1728,710 1764,712"/>
</svg>
</body></html>
